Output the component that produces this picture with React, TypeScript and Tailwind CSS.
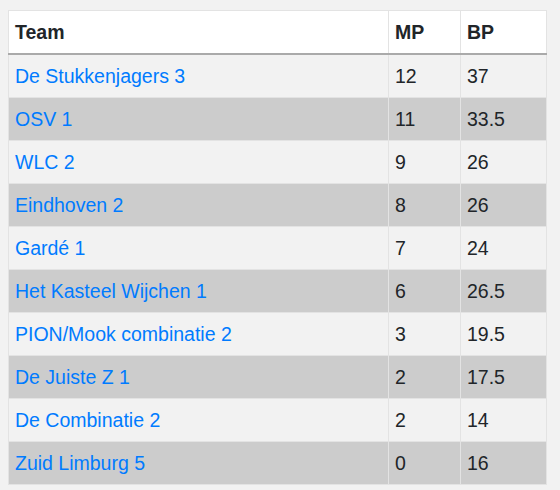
const rows: [string, string, string][] = [
  ["De Stukkenjagers 3", "12", "37"],
  ["OSV 1", "11", "33.5"],
  ["WLC 2", "9", "26"],
  ["Eindhoven 2", "8", "26"],
  ["Gardé 1", "7", "24"],
  ["Het Kasteel Wijchen 1", "6", "26.5"],
  ["PION/Mook combinatie 2", "3", "19.5"],
  ["De Juiste Z 1", "2", "17.5"],
  ["De Combinatie 2", "2", "14"],
  ["Zuid Limburg 5", "0", "16"],
];

export default function App() {
  return (
    <div className="min-h-[490px] bg-[#f2f2f2] pt-[10px] pl-2 font-['Liberation_Sans',Arial,sans-serif] text-[19.5px] leading-[28px] text-[#212529]">
      <table className="w-[539px] border-collapse border border-[#e3e3e3]">
        <thead>
          <tr className="bg-white">
            <th className="w-[380px] border-b-2 border-b-[#aaaaaa] px-[6px] py-[7px] text-left font-bold">Team</th>
            <th className="w-[72px] border-l border-l-[#e3e3e3] border-b-2 border-b-[#aaaaaa] px-[6px] py-[7px] text-left font-bold">MP</th>
            <th className="border-l border-l-[#e3e3e3] border-b-2 border-b-[#aaaaaa] px-[6px] py-[7px] text-left font-bold">BP</th>
          </tr>
        </thead>
        <tbody>
          {rows.map(([team, mp, bp], i) => (
            <tr key={team} className={i % 2 === 0 ? "bg-[#f2f2f2]" : "bg-[#cccccc]"}>
              <td className="border-t border-[#e3e3e3] px-[6px] py-[7px]">
                <a href="#" className="text-[#007bff]">{team}</a>
              </td>
              <td className="border-t border-l border-[#e3e3e3] px-[6px] py-[7px]">{mp}</td>
              <td className="border-t border-l border-[#e3e3e3] px-[6px] py-[7px]">{bp}</td>
            </tr>
          ))}
        </tbody>
      </table>
    </div>
  );
}
